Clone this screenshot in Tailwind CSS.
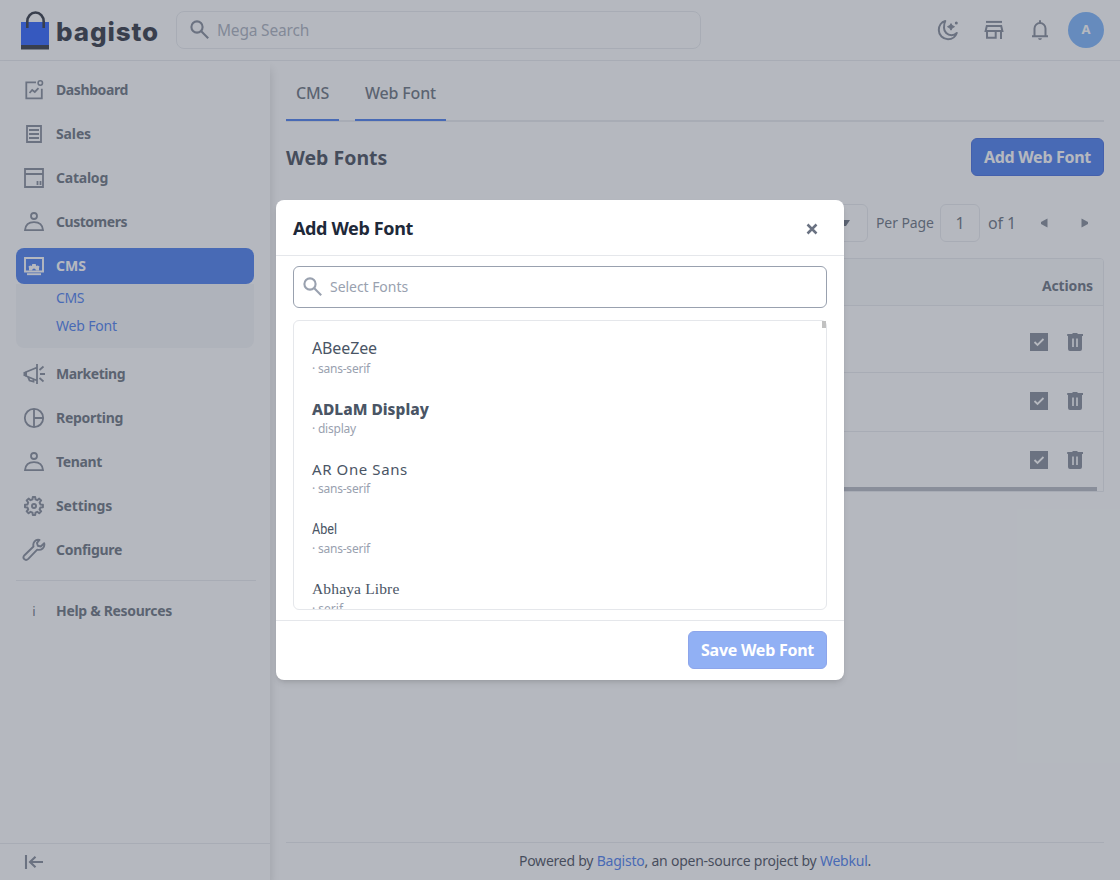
<!DOCTYPE html>
<html lang="en">
<head>
<meta charset="utf-8">
<title>Web Fonts</title>
<script src="https://cdn.jsdelivr.net/npm/@tailwindcss/browser@4"></script>
</head>
<body class="relative h-[880px] w-[1120px] overflow-hidden bg-white font-['Noto_Sans',sans-serif] text-[#4b5563]">
<svg class="hidden">
  <symbol id="user" viewBox="0 0 24 24"><g fill="none" stroke="currentColor" stroke-width="1.8"><circle cx="12" cy="6" r="3"/><path d="M3 20.1c.4-5.200 4-8 9-8s8.600 2.800 9 8z"/></g></symbol>
  <symbol id="search" viewBox="0 0 24 24"><g fill="none" stroke="currentColor" stroke-width="2.100"><circle cx="9" cy="9" r="5.600"/><path d="m13 13 7.200 7.200"/></g></symbol>
  <symbol id="edit" viewBox="0 0 24 24"><path fill="currentColor" d="M3 3h18v18H3z"/><path d="m7.500 12 3 3 6-6" fill="none" stroke="#fff" stroke-width="1.800"/></symbol>
  <symbol id="trash" viewBox="0 0 24 24"><path fill="currentColor" d="M4.200 4H9l1-1h4l1 1h5v2h-1v13q0 2-2 2H7q-2 0-2-2V6h-.8z"/><path d="M10 8.500v8.500M14 8.500v8.500" stroke="#fff" stroke-width="1.600"/></symbol>
</svg>

<div class="flex h-full flex-col">
  <header class="flex h-[61px] shrink-0 items-center border-b border-gray-200 pl-5 pr-4">
    <svg class="mt-px h-10 w-[30px] shrink-0" viewBox="0 0 30 40"><path fill="#0041ff" d="M1 11h28v24H1z"/><path fill="#060c1b" d="M1 34h28v4.500H1z"/><path d="M7.300 17V10.500a7.700 8.500 0 0 1 16.400 0V17" fill="none" stroke="#060c1b" stroke-width="2.600"/></svg>
    <div class="ml-1.5 mt-[3px] w-[120px] font-['Inter',sans-serif] text-[26px] font-extrabold leading-10 tracking-[0.9px] text-[#060c1b]">bagisto</div>
    <div class="flex h-[38px] w-[525px] items-center rounded-lg border border-gray-200 pl-3 text-gray-500">
      <svg class="-ml-px size-6"><use href="#search"/></svg>
      <span class="ml-[5px] pt-px text-[15.500px] tracking-[-0.19px] text-gray-400">Mega Search</span>
    </div>
    <div class="ml-auto flex items-center gap-[22px] text-gray-500">
      <svg class="size-6" viewBox="0 0 24 24"><path d="M9.300 3C5.300 4 2.800 7.700 2.800 12a9.200 9.200 0 0 0 9.200 9.200c4 0 7.500-2.500 8.800-6.200-1.400 1.400-3.300 2.200-5.300 2.200A7.500 7.500 0 0 1 8 9.700C8 7 8 5 9.300 3Z" fill="none" stroke="currentColor" stroke-width="2" stroke-linejoin="round"/><path fill="currentColor" d="m15 5.600 1.200 1.900 2.300 1.200-2.300 1.200-1.200 2.300-1.200-2.300-2.300-1.200 2.300-1.200z" stroke="currentColor" stroke-width="1"/><circle cx="20.300" cy="5" r="1.500" fill="currentColor"/></svg>
      <svg class="size-6" viewBox="0 0 24 24"><path d="M4 3.900h16" stroke="currentColor" stroke-width="2"/><path d="M4.800 7.900h14.400l1.200 5.100H3.600zM5 13v6.800h8.700V13M19 13v8" fill="none" stroke="currentColor" stroke-width="2"/></svg>
      <svg class="size-6" viewBox="0 0 24 24"><path d="M6.500 18V10.500a5.500 5.500 0 0 1 11 0V18M4 18.200h16M12 2.200v3" fill="none" stroke="currentColor" stroke-width="2"/><path fill="currentColor" d="M10 20.200h4q-.3 1.800-2 1.800t-2-1.800"/></svg>
      <div class="-ml-1.5 flex size-9 items-center justify-center rounded-full bg-[#60a5fa] text-[13px] font-bold text-white">A</div>
    </div>
  </header>

  <div class="flex min-h-0 flex-1">
    <aside class="flex w-[270px] shrink-0 flex-col shadow-[0_8px_10px_0_rgba(0,0,0,0.2)]">
      <nav class="flex flex-col px-4 pt-[11px] text-[14px] font-bold [&_span]:pb-0.5">
        <div class="flex h-11 items-start"><div class="flex h-9 items-center gap-2.5 pl-1.5"><svg class="size-6 text-gray-500" viewBox="0 0 24 24"><path d="M14 4.300H4.300v16h15.500v-9.500M7.500 15l2.700-3 2.600 2 3.700-3.800" fill="none" stroke="currentColor" stroke-width="1.800"/><circle cx="18.300" cy="5" r="2.200" fill="none" stroke="currentColor" stroke-width="1.600"/></svg><span class="tracking-[-0.4px]">Dashboard</span></div></div>
        <div class="flex h-11 items-start"><div class="flex h-9 items-center gap-2.5 pl-1.5"><svg class="size-6 text-gray-500" viewBox="0 0 24 24"><path d="M5 4h14v16H5zM7 8h10M7 12h10M7 16h10" fill="none" stroke="currentColor" stroke-width="1.800"/></svg><span class="tracking-[-0.13px]">Sales</span></div></div>
        <div class="flex h-11 items-start"><div class="flex h-9 items-center gap-2.5 pl-1.5"><svg class="size-6 text-gray-500" viewBox="0 0 24 24"><path d="M3 3h18v18H3zM3 8h18M15.500 15v4M18.500 15v4" fill="none" stroke="currentColor" stroke-width="1.800"/></svg><span class="tracking-[-0.23px]">Catalog</span></div></div>
        <div class="flex h-11 items-start"><div class="flex h-9 items-center gap-2.5 pl-1.5"><svg class="size-6 text-gray-500"><use href="#user"/></svg><span class="tracking-[-0.47px]">Customers</span></div></div>
        <div class="flex h-9 w-[238px] items-center gap-2.5 rounded-lg bg-[#2563eb] pl-1.5 text-white"><svg class="size-6" viewBox="0 0 24 24"><path d="M3 4h18v13.500H3z" fill="none" stroke="currentColor" stroke-width="1.900"/><path d="M5 20.200h14" stroke="currentColor" stroke-width="1.900"/><path fill="currentColor" d="M7 16.500v-2.500l-.5-1.500 1.700-1 1.600.5.500-2h3.400l.5 2 1.600-.5 1.700 1-.5 1.500v2.500h-3q-.4-2-2-2t-2 2z"/></svg><span>CMS</span></div>
        <div class="mb-2 flex h-16 w-[238px] flex-col rounded-b-lg bg-gray-100 pl-10 font-normal leading-7 text-[#2563eb]"><div><span class="tracking-[-0.4px]">CMS</span></div><div><span class="tracking-[-0.17px]">Web Font</span></div></div>
        <div class="flex h-11 items-start"><div class="flex h-9 items-center gap-2.5 pl-1.5"><svg class="size-6 text-gray-500" viewBox="0 0 24 24"><path d="M15 2v20M15 5.500 4 10v4l11 4.500M6 15l1.500 3.500 4 1v-3M17.500 8l4-3.500M18 12h5M17.500 16l4 3.500" fill="none" stroke="currentColor" stroke-width="1.800"/><path fill="currentColor" d="M1.500 10 5 9.500v5L1.500 14z"/></svg><span class="tracking-[-0.45px]">Marketing</span></div></div>
        <div class="flex h-11 items-start"><div class="flex h-9 items-center gap-2.5 pl-1.5"><svg class="size-6 text-gray-500" viewBox="0 0 24 24"><g fill="none" stroke="currentColor" stroke-width="1.800"><circle cx="12" cy="12" r="9.200"/><path d="M12 3v18M12 12h9"/></g></svg><span class="tracking-[-0.29px]">Reporting</span></div></div>
        <div class="flex h-11 items-start"><div class="flex h-9 items-center gap-2.5 pl-1.5"><svg class="size-6 text-gray-500"><use href="#user"/></svg><span class="tracking-[-0.35px]">Tenant</span></div></div>
        <div class="flex h-11 items-start"><div class="flex h-9 items-center gap-2.5 pl-1.5"><svg class="size-6 text-gray-500" viewBox="0 0 24 24"><g fill="none" stroke="currentColor" stroke-width="2"><path stroke-linejoin="round" d="m10.500 5.400.3-2.400h2.400l.3 2.400 1.700.8 2-1.600 1.900 1.900-1.500 2 .8 1.900 2.500.4v2.400l-2.500.3-.8 1.900 1.500 2-1.900 1.900-2-1.500-1.700.8-.3 2.400h-2.400l-.3-2.400-1.900-.8-2 1.500-1.900-1.900 1.500-2-.7-1.900-2.500-.3v-2.400l2.500-.4.7-1.900-1.500-2 1.900-1.900 2 1.600z"/><circle cx="12" cy="12" r="2"/></g></svg><span class="tracking-[-0.17px]">Settings</span></div></div>
        <div class="flex h-[43px] items-start"><div class="flex h-9 items-center gap-2.5 pl-1.5"><svg class="size-6 text-gray-500" viewBox="0 0 24 24"><path d="M17.500 2c-4-1-7 2.500-6 6.500l-9 8.700c-1.500 1.600-1 3.200-.2 4s2.600 1 4-.3l8.900-9.200c4.300 1 8-2 7-6.600l-3.400 3.400-3-.7-.8-2.900z" fill="none" stroke="currentColor" stroke-width="1.900" stroke-linejoin="round"/></svg><span class="tracking-[-0.3px]">Configure</span></div></div>
        <div class="mt-[5px] h-[13px] w-60 border-t border-gray-200"></div>
        <div class="flex h-9 items-center gap-2.5 pl-1.5"><span class="mt-1 w-6 text-center text-[13px] font-normal text-gray-600">i</span><span class="tracking-[-0.31px]">Help &amp; Resources</span></div>
      </nav>
      <div class="mt-auto flex h-[37px] items-center border-t border-gray-200 pl-[22px] text-gray-500"><svg class="size-6" viewBox="0 0 24 24"><path d="M4 5v14M21 12H8M13.500 6.800 8 12l5.500 5.200" fill="none" stroke="currentColor" stroke-width="2.100"/></svg></div>
    </aside>

    <main class="flex flex-1 flex-col px-4">
      <div class="flex h-[61px] gap-4 border-b-2 border-gray-200 text-base font-medium">
        <div class="flex h-[60px] w-[53px] justify-center border-b-2 border-[#2563eb] pt-5"><span class="h-6 leading-6 tracking-[-0.22px]">CMS</span></div>
        <div class="flex h-[60px] w-[91px] justify-center border-b-2 border-[#2563eb] pt-5"><span class="h-6 leading-6 tracking-[-0.17px]">Web Font</span></div>
      </div>
      <div class="mt-4 flex h-[38px] items-center justify-between">
        <div class="pt-0.5 text-[19.500px] font-bold text-gray-800">Web Fonts</div>
        <div class="flex h-[38px] w-[133px] items-center justify-center rounded-md border border-[#1d4ed8] bg-[#2563eb] text-base font-bold tracking-[-0.3px] text-white">Add Web Font</div>
      </div>
      <div class="mt-7 flex h-[38px] items-center justify-end text-gray-600">
        <div class="flex h-[38px] w-[84px] items-center justify-end rounded-md border border-gray-200 pr-[17px]"><svg class="h-1.5 w-2.5" viewBox="0 0 10 6"><path fill="currentColor" d="M0 0h10L6 6H4z"/></svg></div>
        <span class="ml-2 w-14 whitespace-nowrap pb-px text-[14px] tracking-[-0.1px]">Per Page</span>
        <div class="ml-2 flex h-[38px] w-10 items-center justify-center rounded-md border border-gray-200 text-base">1</div>
        <span class="ml-2 w-7 whitespace-nowrap text-base tracking-[-0.1px]">of 1</span>
        <svg class="ml-6 h-3 w-2" viewBox="0 0 8 12"><path fill="#6b7280" d="M7.500 1.500v9L1 7V5z"/></svg>
        <svg class="ml-[33px] mr-[15px] h-3 w-2" viewBox="0 0 8 12"><path fill="#6b7280" d="M.5 1.500v9L7 7V5z"/></svg>
      </div>
      <div class="mt-4 flex h-[234px] shrink-0 flex-col overflow-hidden rounded-t border border-gray-200 text-gray-500">
        <div class="flex h-[47px] shrink-0 items-center justify-end border-b border-gray-200 bg-gray-50 pr-[10px] pt-1.5 text-[14px] font-bold tracking-[-0.15px] text-gray-600">Actions</div>
        <div class="flex h-[67px] shrink-0 items-center justify-end gap-3 border-b border-gray-200 pr-4 pt-1.5"><svg class="size-6"><use href="#edit"/></svg><svg class="size-6"><use href="#trash"/></svg></div>
        <div class="flex h-[59px] shrink-0 items-center justify-end gap-3 border-b border-gray-200 pb-0.5 pr-4"><svg class="size-6"><use href="#edit"/></svg><svg class="size-6"><use href="#trash"/></svg></div>
        <div class="flex h-[55px] shrink-0 items-center justify-end gap-3 pr-4 pt-px"><svg class="size-6"><use href="#edit"/></svg><svg class="size-6"><use href="#trash"/></svg></div>
        <div class="mr-1.5 h-[4px] shrink-0 bg-gray-500/60"></div>
      </div>
      <footer class="mt-auto flex h-[38px] items-center justify-center border-t border-gray-200 pb-0.5 text-[14px] tracking-[-0.23px] text-gray-800"><p>Powered by <span class="text-[#2563eb]">Bagisto</span>, an open-source project by <span class="text-[#2563eb]">Webkul</span>.</p></footer>
    </main>
  </div>
</div>

<div class="absolute inset-0 flex items-center justify-center bg-[#6b7280]/50">
  <section class="flex h-[480px] w-[568px] flex-col rounded-lg bg-white shadow-md">
    <div class="flex h-14 shrink-0 items-center justify-between border-b border-gray-200 pl-[17px] pr-[26px] pt-0.5">
      <h2 class="text-[18px] font-bold tracking-[-0.37px] text-gray-800">Add Web Font</h2>
      <svg class="size-3 text-gray-500" viewBox="0 0 12 12"><path d="m1.500 1.500 9 9m0-9-9 9" stroke="currentColor" stroke-width="2.500"/></svg>
    </div>
    <div class="flex flex-1 flex-col gap-3 px-[17px] pt-2.5">
      <div class="flex h-[42px] items-center rounded-md border border-gray-400 pl-[7px] text-gray-400"><svg class="size-6"><use href="#search"/></svg><span class="ml-[5px] pb-0.5 text-[14px] tracking-[-0.05px]">Select Fonts</span></div>
      <div class="relative h-[290px]">
        <div class="h-[290px] overflow-hidden rounded-md border border-gray-200 pl-[18px] pt-[15px] text-gray-600">
          <div class="h-[61px]"><div class="h-[25px] text-base leading-6 tracking-[-0.13px]">ABeeZee</div><div class="text-xs leading-4 tracking-[-0.21px] text-gray-400">· sans-serif</div></div>
          <div class="h-[60px]"><div class="h-6 text-[15.500px] font-extrabold leading-[25px]">ADLaM Display</div><div class="text-xs leading-4 tracking-[-0.21px] text-gray-400">· display</div></div>
          <div class="h-[60px]"><div class="h-6 text-[15px] leading-[25px] tracking-[0.6px]">AR One Sans</div><div class="text-xs leading-4 tracking-[-0.21px] text-gray-400">· sans-serif</div></div>
          <div class="h-[60px]"><div class="h-6 font-['Roboto',sans-serif] text-[15px] leading-6"><span class="inline-block origin-left scale-x-84">Abel</span></div><div class="text-xs leading-4 tracking-[-0.21px] text-gray-400">· sans-serif</div></div>
          <div class="h-[60px]"><div class="h-6 font-['Liberation_Serif',serif] text-[15.500px] leading-[23px] tracking-[0.15px]">Abhaya Libre</div><div class="text-xs leading-4 text-gray-400">· serif</div></div>
        </div>
        <div class="absolute right-px top-px h-[7px] w-1 bg-[#c1c1c1]"></div>
      </div>
    </div>
    <div class="flex h-[60px] shrink-0 items-start justify-end border-t border-gray-200 pr-[17px] pt-2.5"><div class="flex h-[38px] w-[139px] items-center justify-center rounded-md border border-[#1d4ed8] bg-[#2563eb] text-base font-bold tracking-[-0.26px] text-white opacity-50">Save Web Font</div></div>
  </section>
</div>
</body>
</html>
